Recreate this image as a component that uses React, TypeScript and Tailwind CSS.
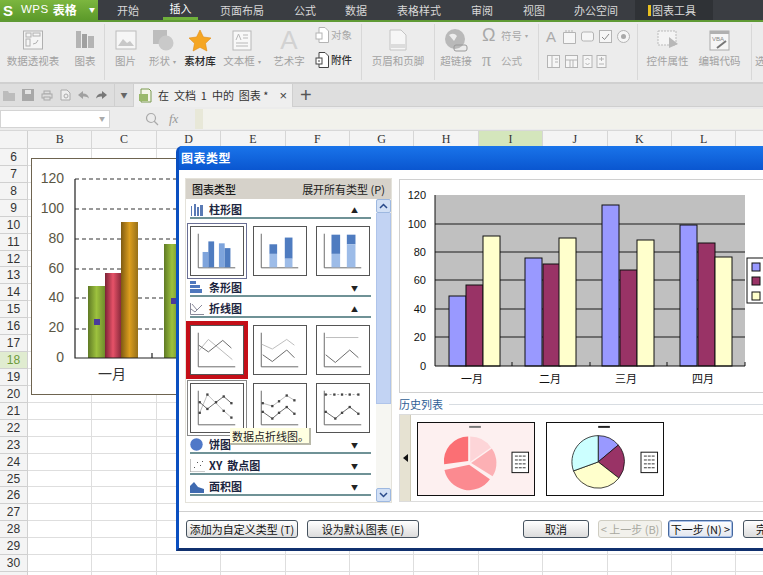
import React from "react";

const FONT = "font-['Noto_Sans_CJK_SC','Liberation_Sans',sans-serif]";

const menu = [
  { t: "开始", c: "w-[46px]" },
  { t: "插入", c: "w-[35px] mr-[22px] justify-center border-b-[3px] border-[#6fb03a] text-white" },
  { t: "页面布局", c: "w-[74px]" },
  { t: "公式", c: "w-[51px]" },
  { t: "数据", c: "w-[52px]" },
  { t: "表格样式", c: "w-[74px]" },
  { t: "审阅", c: "w-[52px]" },
  { t: "视图", c: "w-[51px]" },
  { t: "办公空间", c: "w-[61px]" },
];

function Sep({ c = "" }: { c?: string }) {
  return <div className={"w-px h-[56px] bg-[#d8d8d8] shrink-0 " + c} />;
}

function Big({ w, label, dark, caret, children }: { w: string; label: string; dark?: boolean; caret?: boolean; children: React.ReactNode }) {
  return (
    <div className={"flex flex-col items-center shrink-0 " + w}>
      <div className="h-[32px] flex items-center justify-center">{children}</div>
      <div className={"text-[10.5px] leading-[14px] whitespace-nowrap mt-[-2px] " + (dark ? "text-[#2d2d2d] font-medium" : "text-[#a2a2a2]")}>
        {label}
        {caret && <span className="text-[6px] ml-[3px] align-middle">▾</span>}
      </div>
    </div>
  );
}

function Doc({ dark }: { dark?: boolean }) {
  const s = dark ? "#444" : "#b4b4b4";
  return (
    <svg width="14" height="16" viewBox="0 0 14 16" fill="#fff" stroke={s} className="shrink-0">
      <path d="M4 .5h6l3.500 3.500v11.500H4z" />
      <rect x="1" y="6" width="6" height="6" />
      {dark && <path d="M3 9h2" />}
    </svg>
  );
}

function MiniBox({ children, w = 15 }: { children: React.ReactNode; w?: number }) {
  return (
    <svg width={w} height="15" viewBox={"0 0 " + w + " 15"} fill="#f6f6f6" stroke="#b4b4b4" className="shrink-0">
      {children}
    </svg>
  );
}

function Ribbon() {
  return (
    <div className="h-[62px] bg-[#ececec] border-b-2 border-[#d0d0d0] flex items-start pt-[2px] shrink-0">
      <Big w="w-[66px]" label="数据透视表">
        <svg width="22" height="22" viewBox="0 0 22 22" fill="none" stroke="#b0b0b0"><rect x="1.5" y="2" width="19" height="18" fill="#f5f5f5" /><rect x="4" y="4" width="5" height="4" /><rect x="11" y="4" width="7" height="3" /><rect x="4" y="10" width="4" height="7" /><path d="M11 15q4 0 5-4" /></svg>
      </Big>
      <Big w="w-[38px]" label="图表">
        <svg width="20" height="20" viewBox="0 0 20 20" fill="#b4b4b4"><rect x="1" y="1" width="5" height="17" /><rect x="7" y="4" width="5" height="14" fill="#a0a0a0" /><rect x="13" y="6" width="6" height="12" /></svg>
      </Big>
      <Sep />
      <Big w="w-[41px]" label="图片">
        <svg width="22" height="20" viewBox="0 0 22 20" fill="#f6f6f6" stroke="#bcbcbc"><rect x="1" y="1" width="20" height="18" /><path d="M3 16l5-7 4 4 3-2 4 5z" fill="#c8c8c8" stroke="none" /></svg>
      </Big>
      <Big w="w-[33px]" label="形状" caret>
        <svg width="22" height="22" viewBox="0 0 22 22"><rect x="1" y="1" width="14" height="14" fill="#bdbdbd" /><circle cx="14" cy="14" r="7.5" fill="#c9c9c9" /></svg>
      </Big>
      <Big w="w-[42px]" label="素材库" dark>
        <svg width="24" height="23" viewBox="0 0 24 23"><path d="M12 1l3.4 7 7.6 1-5.500 5.300 1.400 7.700-6.900-3.700-6.900 3.700 1.400-7.700L1 9l7.600-1z" fill="#f5a623" stroke="#e08a10" strokeWidth="0.6" /></svg>
      </Big>
      <Big w="w-[42px]" label="文本框" caret>
        <svg width="20" height="21" viewBox="0 0 20 21" fill="#f8f8f8" stroke="#b8b8b8"><rect x="1" y="1" width="18" height="19" /><path d="M4 10l2.500-6 2.500 6M11 5h5M11 8h5M4 13h12M4 16h12" fill="none" /></svg>
      </Big>
      <Big w="w-[52px]" label="艺术字">
        <span className="text-[26px] leading-none text-[#d2d2d2] font-['Liberation_Sans',sans-serif]">A</span>
      </Big>
      <div className="w-[44px] shrink-0 flex flex-col gap-[9px] pt-[3px]">
        <div className="flex items-center gap-[2px] text-[10.5px] leading-[16px] text-[#a8a8a8]"><Doc />对象</div>
        <div className="flex items-center gap-[2px] text-[10.5px] leading-[16px] text-[#333] font-medium"><Doc dark />附件</div>
      </div>
      <Sep c="ml-[2px]" />
      <Big w="w-[72px]" label="页眉和页脚">
        <svg width="18" height="22" viewBox="0 0 18 22" fill="#f6f6f6" stroke="#c4c4c4"><path d="M1 1h11l5 5v15H1z" /><rect x="1" y="15" width="16" height="4" fill="#dcdcdc" stroke="none" /></svg>
      </Big>
      <Sep />
      <Big w="w-[42px]" label="超链接">
        <svg width="24" height="24" viewBox="0 0 24 24"><circle cx="11" cy="11" r="10" fill="#b9b9b9" /><path d="M5 7q5-3 8 1l-3 5zM14 14l5-3" fill="#ededed" /><rect x="10" y="17" width="13" height="6" rx="2" fill="none" stroke="#999" /></svg>
      </Big>
      <div className="w-[60px] shrink-0 flex flex-col gap-[10px] pt-[4px] pl-[5px] text-[#a8a8a8]">
        <div className="flex items-center gap-[3px] text-[10.5px] leading-[15px]"><span className="w-[16px] text-[18px] leading-[15px] font-['Liberation_Sans',sans-serif]">Ω</span>符号<span className="text-[6px]">▾</span></div>
        <div className="flex items-center gap-[3px] text-[10.5px] leading-[15px]"><span className="w-[16px] text-[18px] leading-[15px] font-['Liberation_Serif',serif]">π</span>公式</div>
      </div>
      <Sep c="ml-px" />
      <div className="w-[98px] shrink-0 flex flex-col gap-[10px] pt-[5px] pl-[7px]">
        <div className="flex items-center gap-[3px]">
          <span className="w-[13px] text-[15px] leading-[15px] text-[#aaa] font-['Liberation_Sans',sans-serif]">A</span>
          <MiniBox><path d="M1.500 3.500h12v11h-12z" /><path d="M4 1v3M7 1v3M10 1v3" /></MiniBox>
          <MiniBox><rect x="1.500" y="3" width="12" height="9" rx="2" /></MiniBox>
          <MiniBox><rect x="1.500" y="1.500" width="12" height="12" /><path d="M4 8l2.500 2.500L11 5" fill="none" stroke="#888" /></MiniBox>
          <MiniBox><circle cx="7.500" cy="7.500" r="6" /><circle cx="7.500" cy="7.500" r="2.500" fill="#aaa" stroke="none" /></MiniBox>
        </div>
        <div className="flex items-center gap-[3px]">
          <MiniBox><rect x="1.500" y="1.500" width="12" height="12" /><path d="M6 1.500v12M9 5h3M9 8h3" /></MiniBox>
          <MiniBox><rect x="1.500" y="1.500" width="12" height="12" /><path d="M1.500 6h12M6 6v7.500M9 6v7.500" /></MiniBox>
          <MiniBox w={11}><rect x="1" y="1.500" width="9" height="12" /><path d="M3.500 6l2-2 2 2M3.500 9l2 2 2-2" fill="none" /></MiniBox>
          <MiniBox w={11}><rect x="1" y="1.500" width="9" height="12" /><path d="M3 5h5M5.500 3v4M3 10h5" fill="none" /></MiniBox>
        </div>
      </div>
      <Sep />
      <Big w="w-[59px]" label="控件属性">
        <svg width="22" height="22" viewBox="0 0 22 22"><rect x="1" y="2" width="18" height="14" fill="#f4f4f4" stroke="#bbb" strokeDasharray="2 1" /><path d="M12 8l9 7-9 4z" fill="#b8b8b8" /></svg>
      </Big>
      <Big w="w-[45px]" label="编辑代码">
        <svg width="21" height="21" viewBox="0 0 21 21"><rect x="1" y="1" width="19" height="19" fill="#f6f6f6" stroke="#aaa" /><rect x="1" y="1" width="19" height="3" fill="#b0b0b0" /><text x="3" y="11" fontSize="6" fill="#888" fontFamily="Liberation Sans">VBA</text><path d="M8 18l9-7" stroke="#777" strokeWidth="2" /></svg>
      </Big>
      <Sep c="ml-[9px]" />
      <div className="text-[10.5px] text-[#a2a2a2] leading-[14px] mt-[30px] ml-[3px] whitespace-nowrap">选</div>
    </div>
  );
}

function ToolBar() {
  return (
    <div className="h-[23px] bg-[#dedede] flex items-center shrink-0 border-b border-[#cfcfcf]">
      <div className="w-[115px] h-full flex items-center gap-[7px] pl-[3px] border-r border-[#cfcfcf] shrink-0">
        <svg width="12" height="11" viewBox="0 0 12 11"><path d="M0 1h5l1 2h6v8H0z" fill="#bcbcbc" /></svg>
        <svg width="12" height="12" viewBox="0 0 12 12"><rect width="12" height="12" fill="#a8a8a8" /><rect x="3" y="1" width="6" height="4" fill="#e4e4e4" /></svg>
        <svg width="12" height="11" viewBox="0 0 12 11" fill="#ddd" stroke="#a8a8a8"><rect x="3" y="1" width="6" height="3" /><rect x="1" y="4" width="10" height="4" /><rect x="3" y="7" width="6" height="3" /></svg>
        <svg width="11" height="12" viewBox="0 0 11 12" fill="#eee" stroke="#aaa"><path d="M1 1h6l3 3v7H1z" /><circle cx="6" cy="7" r="2" /></svg>
        <svg width="11" height="9" viewBox="0 0 11 9"><path d="M0 4l5-4v2.500q5 0 6 5-2-2.500-6-2v2.500z" fill="#a0a0a0" /></svg>
        <svg width="11" height="9" viewBox="0 0 11 9"><path d="M11 4L6 0v2.500Q1 2.500 0 7.500q2-2.500 6-2V8z" fill="#777" /></svg>
      </div>
      <div className="w-[18px] flex justify-center text-[7px] text-[#666] shrink-0">▼</div>
      <div className="w-[160px] h-[23px] bg-[#efefef] flex items-center pl-[4px] shrink-0 border-x border-[#cfcfcf]">
        <svg width="14" height="15" viewBox="0 0 14 15"><path d="M3 1h8l2 2v11H3z" fill="#f4f4e8" stroke="#7a9a50" /><rect x="1" y="6" width="9" height="7" fill="#9ab86a" /></svg>
        <span className="ml-[6px] text-[11px] text-[#333] whitespace-pre leading-none">在  文档  1  中的  图表 *</span>
        <span className="ml-auto mr-[5px] text-[13px] leading-none text-[#444] font-['Liberation_Sans',sans-serif]">×</span>
      </div>
      <span className="ml-[7px] text-[20px] leading-none text-[#555] font-['Liberation_Sans',sans-serif]">+</span>
    </div>
  );
}

function FormulaBar() {
  return (
    <div className="h-[24px] bg-[#ececec] flex items-center shrink-0 border-b border-[#d8d8d8]">
      <div className="w-[110px] h-[18px] bg-white border border-[#d4d4d4] flex items-center justify-end pr-[4px] shrink-0">
        <span className="text-[6px] text-[#aaa]">▼</span>
      </div>
      <svg width="14" height="14" viewBox="0 0 14 14" className="ml-[35px] shrink-0" fill="none" stroke="#aaa" strokeWidth="1.200"><circle cx="6" cy="6" r="4.500" /><path d="M9 9l4 4" /></svg>
      <span className="ml-[10px] w-[26px] text-[13px] italic text-[#999] font-['Liberation_Serif',serif] shrink-0">fx</span>
      <div className="flex-1 h-[20px] bg-[#f2f2ec] border-l-[8px] border-[#e8e8d8]" />
    </div>
  );
}

const cols = ["B", "C", "D", "E", "F", "G", "H", "I", "J", "K", "L", ""];
const rows = Array.from({ length: 26 }, (_, i) => i + 6);

function Sheet() {
  return (
    <div className="flex-1 overflow-hidden bg-white">
      <div className="flex h-[18px] bg-[#f4f4f4] border-b border-[#d6d6d6]">
        <div className="w-[28px] shrink-0 border-r border-[#d0d0d0]" />
        {cols.map((c) => (
          <div key={c} className={"w-[64.4px] shrink-0 border-r border-[#d6d6d6] text-center text-[12px] leading-[17px] text-[#333] font-['Liberation_Serif',serif] " + (c === "I" ? "bg-[#d4e6bc]" : "")}>
            {c}
          </div>
        ))}
      </div>
      {rows.map((r) => (
        <div key={r} className="flex h-[16.93px]">
          <div className={"w-[28px] shrink-0 border-r border-b border-[#d0d0d0] text-center text-[12px] leading-[16px] font-['Liberation_Sans',sans-serif] " + (r === 18 ? "bg-[#e0ecd0] text-[#6d9a3a]" : "bg-[#f4f4f4] text-[#333]")}>
            {r < 31 ? r : ""}
          </div>
          {cols.map((c) => (
            <div key={c} className="w-[64.4px] shrink-0 border-r border-b border-[#dedede]" />
          ))}
        </div>
      ))}
    </div>
  );
}

function SheetChart() {
  const grid = [179, 209, 239, 269, 298, 329];
  const labels: [string, number][] = [["120", 178], ["100", 208], ["80", 238], ["60", 268], ["40", 297], ["20", 327], ["0", 357]];
  return (
    <div className="absolute left-[31px] top-[158px] w-[150px] h-[237px] bg-white border border-[#6e6450]">
      <svg width="150" height="237" viewBox="32 159 150 237" className="block">
        <defs>
          <linearGradient id="gg"><stop offset="0" stopColor="#5f7a25" /><stop offset="0.5" stopColor="#9dc13e" /><stop offset="1" stopColor="#6f8c2c" /></linearGradient>
          <linearGradient id="gr"><stop offset="0" stopColor="#7c2236" /><stop offset="0.5" stopColor="#e65268" /><stop offset="1" stopColor="#8a2a3c" /></linearGradient>
          <linearGradient id="go"><stop offset="0" stopColor="#7e5a12" /><stop offset="0.5" stopColor="#dc9e1e" /><stop offset="1" stopColor="#96701a" /></linearGradient>
        </defs>
        {grid.map((y) => <line key={y} x1="75" x2="182" y1={y} y2={y} stroke="#333" strokeDasharray="4 3" />)}
        {labels.map(([t, y]) => <text key={t} x="64" y={y + 5} textAnchor="end" fontSize="14" fill="#5a5644" fontFamily="Liberation Sans">{t}</text>)}
        <rect x="88" y="286" width="17" height="72" fill="url(#gg)" />
        <rect x="105" y="273" width="16" height="85" fill="url(#gr)" />
        <rect x="121" y="222" width="17" height="136" fill="url(#go)" />
        <rect x="164" y="244" width="16" height="114" fill="url(#gg)" />
        <rect x="94" y="319" width="6" height="6" fill="#4a3a9a" />
        <rect x="171" y="298" width="6" height="6" fill="#4a3a9a" />
        <path d="M75 179V358H182M152 358v-5" fill="none" stroke="#222" strokeWidth="1.200" />
        <text x="112" y="379" textAnchor="middle" fontSize="14" fill="#333" fontFamily="Noto Sans CJK SC">一月</text>
      </svg>
    </div>
  );
}

function Axis() {
  return <path d="M7.500 7v35.500H46" fill="none" stroke="#666" />;
}

function Dots({ pts, fill }: { pts: number[][]; fill: string }) {
  return <>{pts.map(([x, y]) => <rect key={x + "-" + y} x={x - 1.2} y={y - 1.2} width="2.400" height="2.400" fill={fill} />)}</>;
}

const P = (p: number[][]) => p.map((q) => q.join(",")).join(" ");

function Thumb({ kind, sel }: { kind: string; sel?: "red" | "blue" | "gray" }) {
  const a = "#7ea4dc";
  const b = "#4f7cc0";
  return (
    <div className={"w-[54px] h-[50px] bg-white border border-[#555] shrink-0 " + (sel === "red" ? "outline-4 outline-[#c40f18]" : sel === "blue" ? "outline-1 outline-offset-[2px] outline-[#6a6f95]" : sel === "gray" ? "outline-1 outline-offset-[2px] outline-[#888]" : "")}>
      <svg width="52" height="48" viewBox="0 0 54 50">
        <Axis />
        {kind === "bar1" && <>
          <rect x="12" y="26" width="6" height="16" fill={a} /><rect x="18" y="15" width="6" height="27" fill={b} />
          <rect x="29" y="17" width="6" height="25" fill={a} /><rect x="35" y="22" width="6" height="20" fill={b} />
        </>}
        {kind === "bar2" && <>
          <rect x="16" y="18" width="8" height="10" fill={b} /><rect x="16" y="28" width="8" height="14" fill="#9dbce8" />
          <rect x="32" y="11" width="8" height="22" fill={b} /><rect x="32" y="33" width="8" height="9" fill="#9dbce8" />
        </>}
        {kind === "bar3" && <>
          <rect x="15" y="8" width="9" height="20" fill={b} /><rect x="15" y="28" width="9" height="14" fill="#9dbce8" />
          <rect x="31" y="8" width="9" height="10" fill={b} /><rect x="31" y="18" width="9" height="24" fill="#9dbce8" />
        </>}
        {kind === "l1" && <>
          <polyline points={P([[7, 27], [18, 14], [43, 35]])} fill="none" stroke="#b8b8b8" />
          <polyline points={P([[8, 20], [18, 27], [33, 15], [42, 23]])} fill="none" stroke="#666" />
        </>}
        {kind === "l2" && <>
          <polyline points={P([[8, 19], [19, 24], [34, 14], [42, 20]])} fill="none" stroke="#bbb" />
          <polyline points={P([[9, 30], [19, 37], [34, 25], [42, 33]])} fill="none" stroke="#666" />
        </>}
        {kind === "l3" && <>
          <line x1="9" x2="43" y1="12" y2="12" stroke="#bbb" />
          <polyline points={P([[9, 30], [19, 38], [34, 25], [43, 33]])} fill="none" stroke="#666" />
        </>}
        {kind === "m1" && <>
          <polyline points={P([[9, 30], [17, 11], [34, 28], [42, 35]])} fill="none" stroke="#bbb" />
          <polyline points={P([[9, 19], [17, 26], [26, 19], [34, 13], [42, 20]])} fill="none" stroke="#666" />
          <Dots pts={[[9, 30], [17, 11], [34, 28], [42, 35], [9, 19], [17, 26], [26, 19], [34, 13], [42, 20]]} fill="#444" />
        </>}
        {kind === "m2" && <>
          <polyline points={P([[9, 20], [19, 23], [26, 18], [34, 12], [42, 17]])} fill="none" stroke="#bbb" />
          <polyline points={P([[9, 29], [19, 36], [26, 30], [34, 24], [42, 31]])} fill="none" stroke="#666" />
          <Dots pts={[[9, 20], [19, 23], [26, 18], [34, 12], [42, 17], [9, 29], [19, 36], [26, 30], [34, 24], [42, 31]]} fill="#444" />
        </>}
        {kind === "m3" && <>
          <line x1="9" x2="43" y1="11" y2="11" stroke="#aaa" strokeDasharray="2 2" />
          <polyline points={P([[9, 29], [19, 36], [26, 30], [34, 24], [43, 31]])} fill="none" stroke="#666" />
          <Dots pts={[[9, 11], [18, 11], [26, 11], [34, 11], [43, 11], [9, 29], [19, 36], [26, 30], [34, 24], [43, 31]]} fill="#444" />
        </>}
      </svg>
    </div>
  );
}

function SecHead({ label, open, icon, c = "h-[21px]" }: { label: string; open?: boolean; icon: React.ReactNode; c?: string }) {
  return (
    <div className={"w-[181px] border-b-2 border-[#6f9296] flex items-end pb-px shrink-0 " + c}>
      <div className="w-[16px] h-[14px] flex items-end shrink-0">{icon}</div>
      <span className="ml-[3px] text-[11px] leading-[14px] font-bold text-[#1c2540] whitespace-pre">{label}</span>
      <span className="ml-auto mr-[13px] text-[7px] leading-[12px] text-[#222]">{open ? "▲" : "▼"}</span>
    </div>
  );
}

const IconBar = <svg width="14" height="13" viewBox="0 0 14 13"><path d="M1 13V3h1v10zM4 13V1h2v12zM7 13V4h2v9zM10 13V2h3v11z" fill="#5a7ab5" /></svg>;
const IconHBar = <svg width="13" height="14" viewBox="0 0 13 14"><path d="M0 1h6v3H0zM0 5h10v3H0zM0 9h12v4H0z" fill="#4f78bd" /></svg>;
const IconLine = <svg width="14" height="13" viewBox="0 0 14 13" fill="none" stroke="#8a8a9a"><path d="M.500 1v11.500H14M1 7l4 3 7-7M2 2l5 6" /></svg>;
const IconPie = <svg width="13" height="13" viewBox="0 0 13 13"><circle cx="6.500" cy="6.500" r="6.200" fill="#4f78c8" /></svg>;
const IconXY = <svg width="15" height="13" viewBox="0 0 15 13" fill="#555"><path d="M0 0v13h15v-.600H.600V0z" fill="#9a9a9a" /><rect x="4" y="8" width="1" height="1" /><rect x="7" y="3" width="1" height="1" /><rect x="10" y="6" width="1" height="1" /><rect x="12" y="2" width="1" height="1" /></svg>;
const IconArea = <svg width="14" height="13" viewBox="0 0 14 13"><path d="M0 13V6l4-4 4 5 6 2v4z" fill="#3f6ab0" /></svg>;

function Scrollbar() {
  return (
    <div className="w-[15px] ml-auto shrink-0 bg-[#f6f6f2] flex flex-col">
      <div className="h-[14px] bg-[#d2e0f5] border border-[#9db8e0] rounded-[2px] flex items-center justify-center">
        <svg width="9" height="6" viewBox="0 0 9 6" fill="none" stroke="#2a4a8a" strokeWidth="1.500"><path d="M1 5l3.500-3.500L8 5" /></svg>
      </div>
      <div className="h-[191px] bg-[#c2d3f3] border-x border-b border-[#afc4ea]" />
      <div className="flex-1" />
      <div className="h-[14px] bg-[#d2e0f5] border border-[#9db8e0] rounded-[2px] flex items-center justify-center">
        <svg width="9" height="6" viewBox="0 0 9 6" fill="none" stroke="#2a4a8a" strokeWidth="1.500"><path d="M1 1l3.500 3.500L8 1" /></svg>
      </div>
    </div>
  );
}

function LeftPanel() {
  return (
    <div className="w-[207px] h-[325px] ml-[6px] mt-[8px] shrink-0 flex flex-col border border-[#e4e2da] relative">
      <div className="h-[20px] bg-[#d6d2ca] flex items-center justify-between px-[6px] shrink-0 text-[#1b1b1b]">
        <span className="text-[11px] leading-none font-medium">图表类型</span>
        <span className="text-[11px] leading-none">展开所有类型 (P)</span>
      </div>
      <div className="flex flex-1 overflow-hidden bg-white">
        <div className="pl-[4px] w-[190px] flex flex-col shrink-0 overflow-hidden">
          <SecHead label="柱形图" open icon={IconBar} c="h-[20px]" />
          <div className="flex gap-[9px] mt-[7px] shrink-0">
            <Thumb kind="bar1" sel="blue" /><Thumb kind="bar2" /><Thumb kind="bar3" />
          </div>
          <SecHead label="条形图" icon={IconHBar} />
          <SecHead label="折线图" open icon={IconLine} />
          <div className="flex gap-[9px] mt-[7px] shrink-0">
            <Thumb kind="l1" sel="red" /><Thumb kind="l2" /><Thumb kind="l3" />
          </div>
          <div className="flex gap-[9px] mt-[8px] shrink-0">
            <Thumb kind="m1" sel="gray" /><Thumb kind="m2" /><Thumb kind="m3" />
          </div>
          <SecHead label="饼图" icon={IconPie} />
          <SecHead label="XY  散点图" icon={IconXY} />
          <SecHead label="面积图" icon={IconArea} />
          <div className="mt-[8px] ml-[4px] w-[10px] h-[5px] rounded-t-full bg-[#8fa0c0] shrink-0" />
        </div>
        <Scrollbar />
      </div>
      <div className="absolute left-[44px] top-[249px] w-[81px] h-[17px] bg-[#ffffe1] border-r-2 border-b-2 border-[#b8b8a8] pl-[2px] text-[11px] leading-[16px] text-[#222] whitespace-nowrap">
        数据点折线图。
      </div>
    </div>
  );
}

function PreviewChart() {
  const groups = [
    [[449, 296], [466, 285], [483, 236]],
    [[525, 258], [543, 264], [559, 238]],
    [[602, 205], [620, 270], [637, 240]],
    [[680, 225], [698, 243], [715, 257]],
  ];
  const fills = ["#9999ff", "#993366", "#ffffcc"];
  const ys: [string, number][] = [["120", 195], ["100", 224], ["80", 252], ["60", 280], ["40", 309], ["20", 337], ["0", 366]];
  const months: [string, number][] = [["一月", 472], ["二月", 550], ["三月", 626], ["四月", 703]];
  return (
    <div className="h-[214px] bg-white border border-[#d0d0d0] border-r-0 overflow-hidden">
      <svg width="370" height="212" viewBox="400 180 370 212" className="block">
        <rect x="435" y="195" width="310" height="171" fill="#c0c0c0" />
        {[224, 252, 280, 309, 337].map((y) => <line key={y} x1="435" x2="745" y1={y} y2={y} stroke="#1a1a1a" />)}
        {groups.map((g, i) => g.map(([x, top], j) => (
          <rect key={i + "-" + j} x={x} y={top} width="17" height={366 - top} fill={fills[j]} stroke="#111" />
        )))}
        <path d="M435 195V366H745M512 366v-4M590 366v-4M667 366v-4M745 366v-4" fill="none" stroke="#111" />
        {ys.map(([t, y]) => <text key={t} x="426" y={y + 4} textAnchor="end" fontSize="11" fill="#111" fontFamily="Liberation Sans">{t}</text>)}
        {months.map(([t, x]) => <text key={t} x={x} y="383" textAnchor="middle" fontSize="11" fill="#111" fontFamily="Noto Sans CJK SC">{t}</text>)}
        <rect x="747" y="258" width="30" height="45" fill="#fff" stroke="#111" />
        <rect x="752" y="263" width="8" height="8" fill="#9999ff" stroke="#111" />
        <rect x="752" y="277" width="8" height="8" fill="#993366" stroke="#111" />
        <rect x="752" y="292" width="8" height="8" fill="#ffffcc" stroke="#111" />
      </svg>
    </div>
  );
}

function sector(cx: number, cy: number, r: number, a0: number, a1: number) {
  const p = (a: number) => [cx + r * Math.sin((a * Math.PI) / 180), cy - r * Math.cos((a * Math.PI) / 180)];
  const [x0, y0] = p(a0);
  const [x1, y1] = p(a1);
  return "M" + cx + " " + cy + "L" + x0 + " " + y0 + "A" + r + " " + r + " 0 " + (a1 - a0 > 180 ? 1 : 0) + " 1 " + x1 + " " + y1 + "Z";
}

function MiniLegend() {
  return (
    <>
      <rect x="96" y="30" width="17" height="21" fill="#fff" stroke="#111" />
      {[34, 38, 42, 46].map((y) => <line key={y} x1="99" x2="110" y1={y} y2={y} stroke="#333" strokeDasharray="3 1" />)}
    </>
  );
}

function HistoryPies() {
  return (
    <div className="flex h-[88px] border border-[#dcdcdc] border-r-0 bg-white">
      <div className="w-[11px] bg-[#e6e2d2] border-r border-[#cfcbb8] flex items-center justify-center shrink-0">
        <svg width="5" height="8" viewBox="0 0 5 8"><path d="M5 0v8L0 4z" fill="#111" /></svg>
      </div>
      <div className="flex items-start gap-[11px] pl-[6px] pt-[7px]">
        <div className="w-[118px] h-[74px] border border-[#111] bg-[#fdf0f0]">
          <svg width="116" height="72" viewBox="0 0 118 74">
            <rect x="52" y="3" width="12" height="2" fill="#777" />
            <path d={sector(53, 40, 26, 0, 55)} fill="#fdd5d8" />
            <path d={sector(54, 41, 26, 55, 122)} fill="#fcb0b4" />
            <path d={sector(52, 43, 26, 125, 258)} fill="#fb8a90" />
            <path d={sector(51, 39, 25, 262, 360)} fill="#fb6f74" />
            <MiniLegend />
          </svg>
        </div>
        <div className="w-[118px] h-[74px] border border-[#111] bg-white">
          <svg width="116" height="72" viewBox="0 0 118 74">
            <rect x="52" y="3" width="12" height="2" fill="#222" />
            <path d={sector(52, 40, 27, 0, 50)} fill="#9999ff" stroke="#111" strokeWidth="0.800" />
            <path d={sector(52, 40, 27, 50, 128)} fill="#993366" stroke="#111" strokeWidth="0.800" />
            <path d={sector(52, 40, 27, 128, 250)} fill="#ffffcc" stroke="#111" strokeWidth="0.800" />
            <path d={sector(52, 40, 27, 250, 360)} fill="#ccffff" stroke="#111" strokeWidth="0.800" />
            <MiniLegend />
          </svg>
        </div>
      </div>
    </div>
  );
}

function Btn({ w, label, state }: { w: string; label: string; state?: "off" | "focus" }) {
  const base = "h-[18px] rounded-[3px] border text-[11px] leading-none flex items-center justify-center whitespace-nowrap shrink-0 overflow-hidden ";
  const look =
    state === "off"
      ? "border-[#cfcdc2] bg-[#f2f1ec] text-[#a8a8a0]"
      : state === "focus"
      ? "border-[#45689e] bg-linear-to-b from-white to-[#e2e6ee] text-[#111] ring-1 ring-inset ring-[#a8c0e8]"
      : "border-[#45525e] bg-linear-to-b from-white to-[#dcdcdc] text-[#111]";
  return <div className={base + look + " " + w}>{label}</div>;
}

function Dialog() {
  return (
    <div className="absolute left-[176px] top-[146px] w-[600px] h-[405px] flex flex-col rounded-t-[6px] bg-[#0a5bd6] border-x-[3px] border-b-[3px] border-[#0a4fc0] border-b-[#10306e] overflow-hidden">
      <div className="h-[24px] bg-linear-to-b from-[#1a74ea] to-[#0a56d0] flex items-center pl-[2px] shrink-0">
        <span className="text-white text-[12px] font-bold leading-none tracking-[0.5px]">图表类型</span>
      </div>
      <div className="flex-1 bg-white flex flex-col min-h-0">
        <div className="flex">
          <LeftPanel />
          <div className="ml-[7px] mt-[9px] flex-1 min-w-0">
            <PreviewChart />
            <div className="flex items-center h-[15px] mt-[4px] mb-[2px]">
              <span className="text-[11px] leading-none text-[#315f96] whitespace-nowrap">历史列表</span>
              <div className="flex-1 h-px bg-[#d8dde2] ml-[6px]" />
            </div>
            <HistoryPies />
          </div>
        </div>
        <div className="mx-0 mt-[8px] border-t border-[#cfcfcf] pt-[8px] flex items-start pl-[7px]">
          <Btn w="w-[112px]" label="添加为自定义类型 (T)" />
          <Btn w="w-[112px] ml-[9px]" label="设为默认图表 (E)" />
          <Btn w="w-[66px] ml-[104px]" label="取消" />
          <Btn w="w-[64px] ml-[9px]" label="< 上一步 (B)" state="off" />
          <Btn w="w-[65px] ml-[6px]" label="下一步 (N) >" state="focus" />
          <Btn w="w-[65px] ml-[10px] justify-start! pl-[12px]" label="完成" />
        </div>
      </div>
    </div>
  );
}

export default function App() {
  return (
    <div className={"relative w-[763px] h-[575px] overflow-hidden flex flex-col bg-white " + FONT}>
      <div className="h-[22px] bg-[#3a3d42] border-b-2 border-[#5f9a35] flex items-stretch shrink-0">
        <div className="w-[98px] bg-linear-to-b from-[#7cb63f] to-[#5c9a2a] flex items-center pl-[3px] shrink-0 text-white">
          <span className="text-[15px] leading-none font-bold font-['Liberation_Sans',sans-serif]">S</span>
          <span className="ml-[8px] text-[11.5px] leading-none font-['Liberation_Sans',sans-serif] tracking-[0.5px]">WPS</span>
          <span className="ml-[4px] text-[12px] leading-none font-bold">表格</span>
          <span className="ml-auto mr-[3px] text-[6px] leading-none">▼</span>
        </div>
        <div className="flex items-stretch text-[11px] text-[#d8d8d8] pl-[19px]">
          {menu.map((m) => (
            <div key={m.t} className={"flex items-center whitespace-nowrap shrink-0 " + m.c}>
              {m.t}
            </div>
          ))}
        </div>
        <div className="flex items-center w-[78px] bg-[#2f3236] text-[11px] text-[#d8d8d8] pl-[13px]">
          <span className="w-[3px] h-[11px] bg-[#e8c020] mr-[1px]" />图表工具
        </div>
      </div>
      <Ribbon />
      <ToolBar />
      <FormulaBar />
      <Sheet />
      <SheetChart />
      <Dialog />
    </div>
  );
}
